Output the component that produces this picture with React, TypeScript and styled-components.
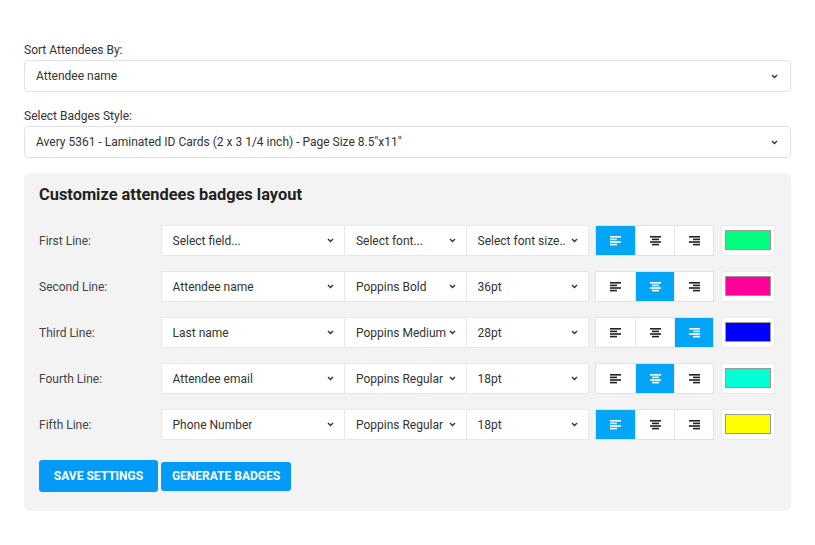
import React from "react";
import styled, { createGlobalStyle } from "styled-components";

const Global = createGlobalStyle`
  html, body { margin: 0; padding: 0; background: #ffffff; }
  body { font-family: Roboto, "Liberation Sans", Arial, sans-serif; color: #333; }
  * { box-sizing: border-box; }
`;

const Page = styled.div`
  width: 815px;
  padding: 43px 24px 0 24px;
  display: flex;
  flex-direction: column;
`;

const FieldGroup = styled.div<{ $mb: number }>`
  display: flex;
  flex-direction: column;
  margin-bottom: ${(p) => p.$mb}px;
`;

const FieldLabel = styled.label`
  font-size: 12px;
  line-height: 14px;
  color: #333;
  margin-bottom: 3px;
`;

const TopSelect = styled.div`
  height: 32px;
  background: #fff;
  border: 1px solid #e2e2e2;
  border-radius: 4px;
  display: flex;
  align-items: center;
  justify-content: space-between;
  padding: 0 12px 0 11px;
  font-size: 12px;
  color: #333;
`;

const Chevron = () => (
  <svg width="7" height="5" viewBox="0 0 7 5" aria-hidden>
    <path d="M1 1 L3.5 3.5 L6 1" fill="none" stroke="#333" strokeWidth="1.4" />
  </svg>
);

const Panel = styled.section`
  background: #f3f3f3;
  border-radius: 6px;
  padding: 12px 16px 19px 15px;
  display: flex;
  flex-direction: column;
`;

const Title = styled.h2`
  margin: 0 0 20px 0;
  font-size: 16.4px;
  line-height: 20px;
  font-weight: 700;
  color: #222;
`;

const Rows = styled.div`
  display: flex;
  flex-direction: column;
  gap: 15px;
`;

const Row = styled.div`
  display: flex;
  align-items: center;
  height: 31px;
`;

const RowLabel = styled.div`
  width: 122px;
  font-size: 12px;
  color: #444;
`;

const RowSelect = styled.div<{ $w: number; $first?: boolean }>`
  width: ${(p) => p.$w}px;
  height: 31px;
  background: #fff;
  border: 1px solid #e8e8e8;
  ${(p) => (p.$first ? "" : "border-left: none;")}
  display: flex;
  align-items: center;
  justify-content: space-between;
  padding: 0 10px 0 11px;
  font-size: 12px;
  color: #333;
  white-space: nowrap;
  overflow: hidden;
`;

const SelectText = styled.span`
  overflow: hidden;
  margin-right: 3px;
`;

const AlignGroup = styled.div`
  margin-left: 6px;
  display: flex;
  border: 1px solid #e2e2e2;
  background: #fff;
  height: 31px;
`;

const AlignBtn = styled.button<{ $active?: boolean }>`
  width: 39px;
  height: 100%;
  border: none;
  border-left: 1px solid #e6e6e6;
  &:first-child { border-left: none; }
  background: ${(p) => (p.$active ? "#03a6f7" : "#fff")};
  display: flex;
  align-items: center;
  justify-content: center;
  padding: 0;
  cursor: pointer;
`;

const ColorBox = styled.div`
  margin-left: 7px;
  width: 54px;
  height: 31px;
  background: #fff;
  border: 1px solid #ececec;
  border-radius: 3px;
  padding: 4px 3px 5px 3px;
  display: flex;
`;

const Swatch = styled.div<{ $c: string }>`
  flex: 1;
  background: ${(p) => p.$c};
  border: 1px solid #999;
`;

const Actions = styled.div`
  display: flex;
  align-items: center;
  gap: 3px;
  margin-top: 20px;
`;

const PrimaryButton = styled.button<{ $h: number; $w: number }>`
  height: ${(p) => p.$h}px;
  width: ${(p) => p.$w}px;
  background: #039bf7;
  color: #fff;
  border: none;
  border-radius: 3px;
  font-family: Roboto, "Liberation Sans", Arial, sans-serif;
  font-weight: 700;
  font-size: 12px;
  text-transform: uppercase;
  padding: 0;
  cursor: pointer;
`;

type Align = "left" | "center" | "right";

const AlignIcon = ({ kind, color }: { kind: Align; color: string }) => {
  const long = 11;
  const short = 7;
  const xs = (w: number) => (kind === "left" ? 0 : kind === "right" ? long - w : (long - w) / 2);
  const ws = [long, short, long, short];
  return (
    <svg width="11" height="10" viewBox="0 0 11 10" aria-hidden>
      {ws.map((w, i) => (
        <rect key={i} x={xs(w)} y={i * 2.6} width={w} height="1.6" fill={color} />
      ))}
    </svg>
  );
};

const lines: { label: string; field: string; font: string; size: string; align: Align; color: string }[] = [
  { label: "First Line:", field: "Select field...", font: "Select font...", size: "Select font size..", align: "left", color: "#00ff7f" },
  { label: "Second Line:", field: "Attendee name", font: "Poppins Bold", size: "36pt", align: "center", color: "#ff0099" },
  { label: "Third Line:", field: "Last name", font: "Poppins Medium", size: "28pt", align: "right", color: "#0000ff" },
  { label: "Fourth Line:", field: "Attendee email", font: "Poppins Regular", size: "18pt", align: "center", color: "#00ffd5" },
  { label: "Fifth Line:", field: "Phone Number", font: "Poppins Regular", size: "18pt", align: "left", color: "#ffff00" },
];

export default function App() {
  return (
    <>
      <Global />
      <Page>
        <FieldGroup $mb={17}>
          <FieldLabel>Sort Attendees By:</FieldLabel>
          <TopSelect>
            <span>Attendee name</span>
            <Chevron />
          </TopSelect>
        </FieldGroup>
        <FieldGroup $mb={15}>
          <FieldLabel>Select Badges Style:</FieldLabel>
          <TopSelect>
            <span>Avery 5361 - Laminated ID Cards (2 x 3 1/4 inch) - Page Size 8.5"x11"</span>
            <Chevron />
          </TopSelect>
        </FieldGroup>
        <Panel>
          <Title>Customize attendees badges layout</Title>
          <Rows>
            {lines.map((l) => (
              <Row key={l.label}>
                <RowLabel>{l.label}</RowLabel>
                <RowSelect $w={185} $first>
                  <SelectText>{l.field}</SelectText>
                  <Chevron />
                </RowSelect>
                <RowSelect $w={122}>
                  <SelectText>{l.font}</SelectText>
                  <Chevron />
                </RowSelect>
                <RowSelect $w={123}>
                  <SelectText>{l.size}</SelectText>
                  <Chevron />
                </RowSelect>
                <AlignGroup>
                  {(["left", "center", "right"] as Align[]).map((a) => (
                    <AlignBtn key={a} $active={l.align === a}>
                      <AlignIcon kind={a} color={l.align === a ? "#fff" : "#222"} />
                    </AlignBtn>
                  ))}
                </AlignGroup>
                <ColorBox>
                  <Swatch $c={l.color} />
                </ColorBox>
              </Row>
            ))}
          </Rows>
          <Actions>
            <PrimaryButton $h={32} $w={119}>Save Settings</PrimaryButton>
            <PrimaryButton $h={29} $w={130}>Generate Badges</PrimaryButton>
          </Actions>
        </Panel>
      </Page>
    </>
  );
}
